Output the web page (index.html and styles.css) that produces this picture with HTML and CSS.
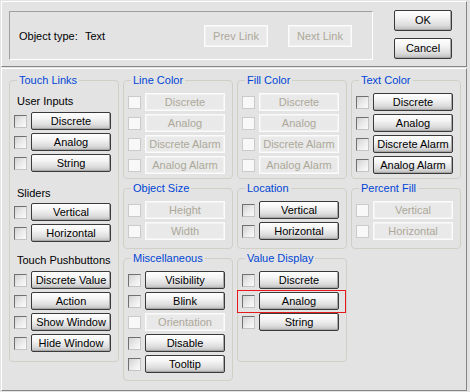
FILE: index.html
```html
<!DOCTYPE html>
<html>
<head>
<meta charset="utf-8">
<link rel="stylesheet" href="styles.css">
</head>
<body>
<div class="panel top">
  <div class="info">
    <span class="lbl">Object type:</span>
    <span class="val">Text</span>
    <span class="btn dis link">Prev Link</span>
    <span class="btn dis link next">Next Link</span>
  </div>
  <div class="actions">
    <span class="btn big">OK</span>
    <span class="btn big">Cancel</span>
  </div>
</div>
<div class="panel main">
  <fieldset class="grp touch">
    <legend>Touch Links</legend>
    <div class="sub s1">User Inputs</div>
    <div class="row"><span class="cb"></span><span class="btn">Discrete</span></div>
    <div class="row"><span class="cb"></span><span class="btn">Analog</span></div>
    <div class="row"><span class="cb"></span><span class="btn">String</span></div>
    <div class="sub s2">Sliders</div>
    <div class="row"><span class="cb"></span><span class="btn">Vertical</span></div>
    <div class="row"><span class="cb"></span><span class="btn">Horizontal</span></div>
    <div class="sub s3">Touch Pushbuttons</div>
    <div class="row"><span class="cb"></span><span class="btn">Discrete Value</span></div>
    <div class="row"><span class="cb"></span><span class="btn">Action</span></div>
    <div class="row"><span class="cb"></span><span class="btn">Show Window</span></div>
    <div class="row"><span class="cb"></span><span class="btn">Hide Window</span></div>
  </fieldset>

  <fieldset class="grp r1">
    <legend>Line Color</legend>
    <div class="row"><span class="cb dis"></span><span class="btn dis">Discrete</span></div>
    <div class="row"><span class="cb dis"></span><span class="btn dis">Analog</span></div>
    <div class="row"><span class="cb dis"></span><span class="btn dis">Discrete Alarm</span></div>
    <div class="row"><span class="cb dis"></span><span class="btn dis">Analog Alarm</span></div>
  </fieldset>

  <fieldset class="grp r1">
    <legend>Fill Color</legend>
    <div class="row"><span class="cb dis"></span><span class="btn dis">Discrete</span></div>
    <div class="row"><span class="cb dis"></span><span class="btn dis">Analog</span></div>
    <div class="row"><span class="cb dis"></span><span class="btn dis">Discrete Alarm</span></div>
    <div class="row"><span class="cb dis"></span><span class="btn dis">Analog Alarm</span></div>
  </fieldset>

  <fieldset class="grp r1">
    <legend>Text Color</legend>
    <div class="row"><span class="cb"></span><span class="btn">Discrete</span></div>
    <div class="row"><span class="cb"></span><span class="btn">Analog</span></div>
    <div class="row"><span class="cb"></span><span class="btn">Discrete Alarm</span></div>
    <div class="row"><span class="cb"></span><span class="btn">Analog Alarm</span></div>
  </fieldset>

  <fieldset class="grp r2">
    <legend>Object Size</legend>
    <div class="row"><span class="cb dis"></span><span class="btn dis">Height</span></div>
    <div class="row"><span class="cb dis"></span><span class="btn dis">Width</span></div>
  </fieldset>

  <fieldset class="grp r2">
    <legend>Location</legend>
    <div class="row"><span class="cb"></span><span class="btn">Vertical</span></div>
    <div class="row"><span class="cb"></span><span class="btn">Horizontal</span></div>
  </fieldset>

  <fieldset class="grp r2">
    <legend>Percent Fill</legend>
    <div class="row"><span class="cb dis"></span><span class="btn dis">Vertical</span></div>
    <div class="row"><span class="cb dis"></span><span class="btn dis">Horizontal</span></div>
  </fieldset>

  <fieldset class="grp misc">
    <legend>Miscellaneous</legend>
    <div class="row"><span class="cb"></span><span class="btn">Visibility</span></div>
    <div class="row"><span class="cb"></span><span class="btn">Blink</span></div>
    <div class="row"><span class="cb dis"></span><span class="btn dis">Orientation</span></div>
    <div class="row"><span class="cb"></span><span class="btn">Disable</span></div>
    <div class="row"><span class="cb"></span><span class="btn">Tooltip</span></div>
  </fieldset>

  <fieldset class="grp valdisp">
    <legend>Value Display</legend>
    <div class="row"><span class="cb"></span><span class="btn">Discrete</span></div>
    <div class="row hl"><span class="cb"></span><span class="btn">Analog</span></div>
    <div class="row"><span class="cb"></span><span class="btn">String</span></div>
  </fieldset>
</div>
</body>
</html>
```

FILE: styles.css
```css
* { box-sizing: border-box; }

html, body {
  margin: 0;
  padding: 0;
  background: #e3e3e3;
}

body {
  font-family: "Liberation Sans", Arial, sans-serif;
  font-size: 11px;
  color: #000;
  padding-top: 1px;
  padding-left: 1px;
}

.panel {
  width: 466px;
  border: 1px solid;
  border-color: #ffffff #858585 #858585 #ffffff;
}

.top {
  height: 66px;
  display: flex;
  align-items: flex-start;
  padding: 9px 0 0 7px;
}

.info {
  width: 364px;
  height: 49px;
  flex: none;
  border: 1px solid;
  border-color: #a0a0a0 #ffffff #ffffff #a0a0a0;
  display: flex;
  align-items: center;
  padding-left: 9px;
  padding-top: 1px;
}

.lbl { width: 66px; flex: none; }
.val { width: 119px; flex: none; }

.btn {
  display: flex;
  align-items: center;
  justify-content: center;
  flex: none;
  width: 80px;
  height: 18px;
  border: 1px solid #3a3a3a;
  border-radius: 2px;
  background: linear-gradient(to bottom, #ffffff 0%, #f4f4f4 35%, #dcdcdc 75%, #bcbcbc 100%);
  box-shadow: inset -1px -1px 0 #a8a8a8;
  white-space: nowrap;
  line-height: 1;
}

.btn.link {
  width: 64px;
  height: 22px;
}
.btn.next { margin-left: 20px; }

.actions {
  margin-left: 21px;
  margin-top: -1px;
  display: flex;
  flex-direction: column;
  gap: 7px;
}

.btn.big {
  width: 58px;
  height: 21px;
}

.btn.dis {
  color: #aca899;
  border: 1px solid #fbfbfb;
  border-radius: 0;
  background: #e9e9e9;
  box-shadow: inset 0 0 0 1px #f2f2f2;
}

.main {
  margin-top: 1px;
  height: 323px;
  padding: 5px 5px 0 7px;
  display: grid;
  grid-template-columns: repeat(4, 110px);
  grid-template-rows: 108px 70px auto;
  column-gap: 4px;
  align-items: start;
}

.grp {
  margin: 0;
  min-width: 0;
  padding: 6px 0 0 0;
  border: 1px solid #d0d0c8;
  border-radius: 4px;
}

.grp legend {
  color: #0046d5;
  line-height: 13px;
  padding: 0 2px;
  margin-left: 7px;
}

.touch {
  grid-row: 1 / span 3;
  grid-column: 1;
  height: 288px;
  padding-top: 0;
}

.r1 { height: 105px; }
.r2 { height: 67px; }
.misc { height: 129px; grid-column: 2; }
.valdisp { height: 110px; grid-column: 3; }

.sub {
  line-height: 13px;
  padding-left: 7px;
  margin-bottom: 4px;
}
.s1 { margin-top: 8px; }
.s2 { margin-top: 15px; margin-bottom: 3px; }
.s3 { margin-top: 12px; }

.row {
  display: flex;
  align-items: center;
  gap: 4px;
  height: 18px;
  padding-left: 4px;
  margin-bottom: 3px;
}

.cb {
  width: 13px;
  height: 13px;
  flex: none;
  border: 1px solid;
  border-color: #707070 #c4c4c4 #c4c4c4 #707070;
  background: linear-gradient(135deg, #d2d2d2 0%, #ececec 55%, #fbfbfb 100%);
}

.cb.dis {
  border-color: #cbcbcb;
  background: #f8f8f8;
}

.hl { position: relative; }
.hl::after {
  content: "";
  position: absolute;
  left: -1px;
  right: 0;
  top: -2px;
  bottom: -3px;
  border: 1px solid #e8191b;
}
```
